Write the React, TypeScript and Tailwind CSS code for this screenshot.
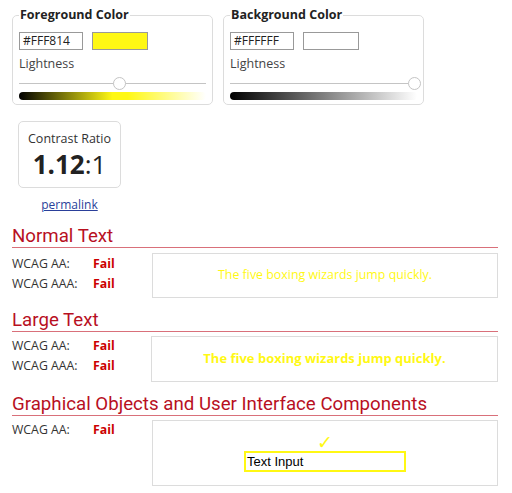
import React from "react";

type ColorProps = {
  label: string;
  hex: string;
  thumb: string;
  gradient: string;
};

const ColorField = ({ label, hex, thumb, gradient }: ColorProps) => (
  <fieldset className="w-[201px] h-[99px] border border-[#dcdcdc] rounded-[5px] px-[6px] pb-[5px]">
    <legend className="px-[1px] text-[12.5px] leading-[18px] font-bold text-[#222]">{label}</legend>
    <div className="flex gap-[9px] mt-[8px]">
      <div className="w-[64px] h-[18px] border border-[#999] text-[12px] leading-[16px] pl-[3px] text-[#222]">{hex}</div>
      <div className="w-[56px] h-[18px] border border-[#999]" style={{ background: hex }} />
    </div>
    <div className="mt-[4px] text-[12.5px] leading-[20px] text-[#444]">Lightness</div>
    <div className="relative h-[14px] mt-[3px]">
      <div className="absolute left-0 right-0 top-[6px] h-px bg-[#c4c4c4]" />
      <div
        className="absolute top-0 w-[13px] h-[13px] rounded-full bg-white border border-[#c4c4c4]"
        style={{ left: thumb }}
      />
    </div>
    <div className="h-[8px] mt-[1px] rounded-full" style={{ background: gradient }} />
  </fieldset>
);

const Heading = ({ children }: { children: React.ReactNode }) => (
  <h2 className="font-['Roboto',sans-serif] text-[18.7px] leading-[22px] text-[#b8101f] border-b border-[#d9707a]">
    {children}
  </h2>
);

const Result = ({ label }: { label: string }) => (
  <div className="flex text-[12.3px] leading-[20px]">
    <span className="w-[81px] text-[#333]">{label}</span>
    <span className="font-bold text-[#c00]">Fail</span>
  </div>
);

export default function App() {
  return (
    <div className="w-[512px] h-[493px] bg-white pl-[12px] pr-[14px] font-['Open_Sans',sans-serif] overflow-hidden">
      <div className="flex gap-[10px] pt-[6px]">
        <ColorField
          label="Foreground Color"
          hex="#FFF814"
          thumb="94px"
          gradient="linear-gradient(to right, #000, #fff814 50%, #fff814 58%, #fff)"
        />
        <ColorField
          label="Background Color"
          hex="#FFFFFF"
          thumb="178px"
          gradient="linear-gradient(to right, #000, #fff)"
        />
      </div>

      <div className="w-[103px] ml-[6px] mt-[16px] text-center">
        <div className="h-[67px] border border-[#dcdcdc] rounded-[5px] pt-[8px]">
          <div className="text-[12.5px] leading-[18px] text-[#333]">Contrast Ratio</div>
          <div className="text-[26px] leading-[32px] text-[#222]">
            <span className="font-bold">1.12</span>:1
          </div>
        </div>
        <a href="#" className="block mt-[8px] text-[12px] leading-[18px] text-[#2a3f9a] underline">
          permalink
        </a>
      </div>

      <div className="mt-[11px]">
        <Heading>Normal Text</Heading>
        <div className="flex mt-[5px]">
          <div className="w-[140px] pt-[1px]">
            <Result label="WCAG AA:" />
            <Result label="WCAG AAA:" />
          </div>
          <div className="flex-1 h-[45px] border border-[#dcdcdc] flex items-center justify-center text-[12.4px] text-[#fff814]">
            The five boxing wizards jump quickly.
          </div>
        </div>
      </div>

      <div className="mt-[11px]">
        <Heading>Large Text</Heading>
        <div className="flex mt-[4px]">
          <div className="w-[139px]">
            <Result label="WCAG AA:" />
            <Result label="WCAG AAA:" />
          </div>
          <div className="flex-1 h-[46px] border border-[#dcdcdc] flex items-center justify-center text-[13px] font-bold text-[#fff814]">
            The five boxing wizards jump quickly.
          </div>
        </div>
      </div>

      <div className="mt-[11px]">
        <Heading>Graphical Objects and User Interface Components</Heading>
        <div className="flex mt-[4px]">
          <div className="w-[140px]">
            <Result label="WCAG AA:" />
          </div>
          <div className="flex-1 h-[66px] border border-[#dcdcdc] flex flex-col items-center justify-center">
            <div className="text-[19px] leading-[16px] text-[#fff814] font-['DejaVu_Sans',sans-serif] font-bold">✓</div>
            <div className="w-[162px] h-[21px] mt-[1px] border-2 border-[#fff814] text-[13px] leading-[17px] pl-[1px] text-black font-['Liberation_Sans',Arial,sans-serif]">
              Text Input
            </div>
          </div>
        </div>
      </div>
    </div>
  );
}
